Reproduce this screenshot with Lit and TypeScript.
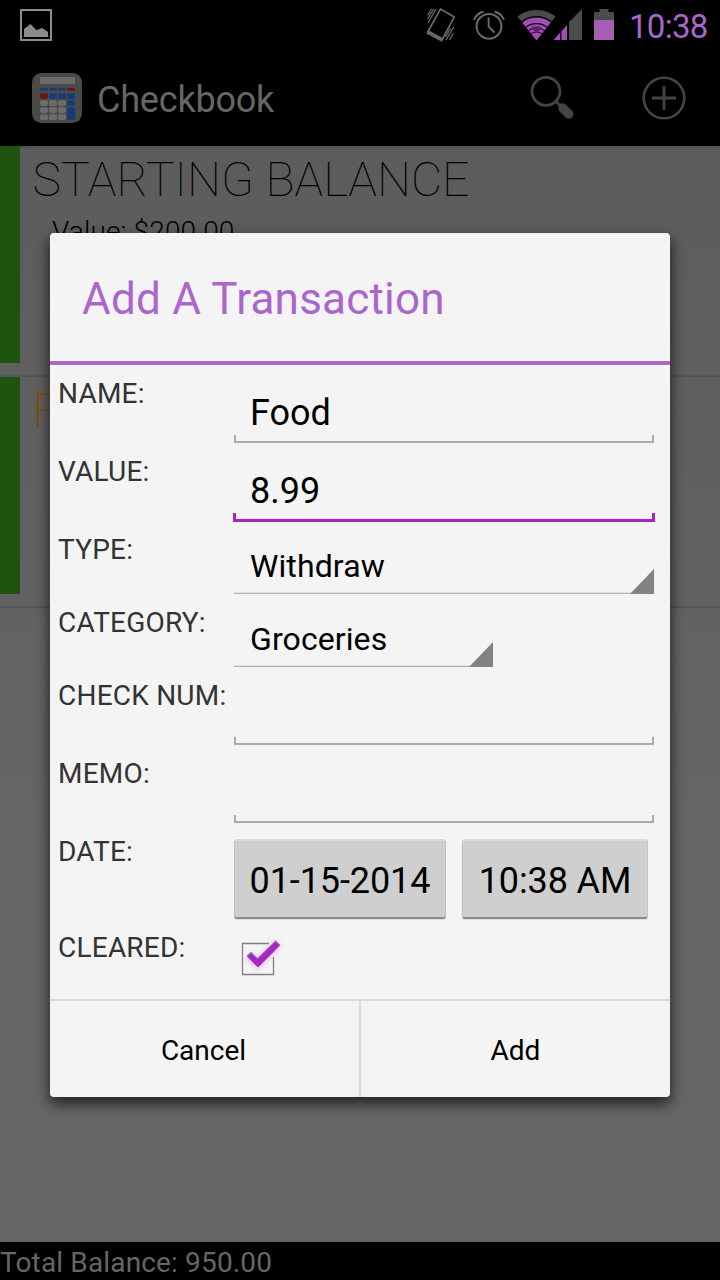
import { LitElement, html, css, svg } from "lit";
import { customElement } from "lit/decorators.js";

const keys: Array<[number, number, number, number, string]> = [
  [8, 15, 8, 2.4, "#173a78"], [17, 15, 8, 2.4, "#173a78"], [26, 15, 8, 2.4, "#173a78"], [35, 15, 8, 2.4, "#6b1610"],
  [8, 20.3, 8, 5.6, "#6b1610"], [17, 20.3, 8, 5.6, "#173a78"], [26, 20.3, 8, 5.6, "#173a78"], [35.2, 20.3, 8, 5.6, "#173a78"],
  [8, 27.3, 8, 5.6, "#6c6c6c"], [17, 27.3, 8, 5.6, "#6c6c6c"], [26, 27.3, 8, 5.6, "#6c6c6c"], [35.2, 27.3, 8, 5.6, "#173a78"],
  [8, 34.3, 8, 5.6, "#6c6c6c"], [17, 34.3, 8, 5.6, "#6c6c6c"], [26, 34.3, 8, 5.6, "#6c6c6c"], [35.2, 34.3, 8, 12.8, "#173a78"],
  [8, 41.3, 8, 5.8, "#6c6c6c"], [17, 41.3, 8, 5.8, "#6c6c6c"], [26, 41.3, 8, 5.8, "#6c6c6c"],
];

@customElement("app-root")
export class AppRoot extends LitElement {
  static styles = css`
    :host { display: block; width: 720px; height: 1280px; font-family: Roboto, sans-serif; }
    *, *::after { box-sizing: border-box; }
    svg { display: block; }
    .screen { position: relative; width: 720px; height: 1280px; overflow: hidden; display: flex; flex-direction: column; background: #000; white-space: nowrap; }
    .status { height: 50px; display: flex; align-items: center; padding: 0 12px 0 20px; flex: none; }
    .status .icons { margin-left: auto; }
    .clock { font-size: 33px; line-height: 50px; color: #aa66cc; margin-left: 12px; width: 80px; padding: 3px 0 0 1px; letter-spacing: -0.7px; }
    .bar { height: 96px; display: flex; align-items: center; padding: 0 34px 0 32px; flex: none; }
    .bar .name { font-size: 36px; color: #666; margin-left: 15px; padding-top: 3px; flex: 1; letter-spacing: -0.2px; }
    .bar .plus { margin-left: 67px; }
    .list { flex: 1; background: linear-gradient(#484848, #585858 2px, #5c5c5c 4px, #666 70%); }
    .item { height: 231px; padding-bottom: 12px; border-bottom: 2px solid #565656; display: flex; }
    .stripe { width: 20px; background: #1f5310; }
    .head { font-size: 48px; font-weight: 100; line-height: 56px; padding: 6px 0 0 12.5px; color: #000; }
    .head.orange { color: #8a4a0c; font-weight: 200; }
    .sub { font-size: 28px; font-weight: 300; line-height: 34px; padding: 7px 0 0 32px; color: #000; letter-spacing: 0.15px; }
    .total { height: 38px; background: #000; color: #666; font-size: 28px; line-height: 41px; flex: none; letter-spacing: 0.15px; }
    .dialog { position: absolute; left: 50px; top: 233px; width: 620px; height: 864px; background: #f4f4f4; border-radius: 4px; overflow: hidden; display: flex; flex-direction: column; }
    .shade { position: absolute; left: 50px; top: 233px; width: 620px; height: 864px; border-radius: 4px; box-shadow: 0 6px 14px 1px rgba(0,0,0,.65); }
    .title { height: 132px; border-bottom: 4px solid #aa66cc; color: #aa66cc; font-size: 44px; line-height: 132px; padding-left: 32px; letter-spacing: 0.22px; }
    .form { padding: 8px 16px 0 8px; height: 634px; }
    .row { display: flex; height: 78px; }
    .row.pick { height: 73px; }
    .row.date { height: 96px; }
    .label { width: 176px; flex: none; font-size: 28px; line-height: 41px; color: #333; letter-spacing: 0.22px; }
    .field { width: 420px; height: 70px; padding: 4px 16px 0; font-size: 36px; line-height: 72px; color: #000; position: relative; }
    .field::after { content: ""; position: absolute; left: 0; right: 0; bottom: 0; height: 8px; border: 2px solid #acacac; border-top: 0; }
    .field.focus::after { left: -1px; right: -1px; bottom: -1px; height: 9px; border-width: 3px; border-top: 0; border-color: #a726c3; }
    .spin { width: 420px; height: 65px; border-bottom: 1px solid #b2b2b2; box-shadow: inset 0 -1px #e0e0e0; display: flex; align-items: flex-end; padding-left: 16px; font-size: 32px; color: #000; letter-spacing: 0.1px; }
    .spin.short { width: 259px; }
    .spin span { flex: 1; line-height: 74px; height: 64px; }
    .tri { width: 24px; height: 25px; background: #828282; clip-path: polygon(100% 0, 100% 100%, 0 100%); margin-bottom: -1px; }
    .btn { height: 80px; margin: 8px 16px 0 0; width: 212px; border-radius: 3px; background: #cfcfcf; border: 1px solid #c3c3c3; border-top: 2px solid #dadada; border-bottom: 2px solid #8e8e8e; font-size: 36px; line-height: 80px; text-align: center; color: #000; box-shadow: 0 1px 1px #dedede; letter-spacing: -0.1px; }
    .btn.time { width: 186px; margin-right: 0; }
    .actions { flex: 1; display: flex; border-top: 2px solid #dadada; border-bottom: 1px solid #d5d5d5; }
    .action { width: 309px; text-align: center; font-size: 28px; line-height: 99px; color: #000; padding-right: 2px; }
    .action + .action { width: 311px; border-left: 2px solid #dadada; padding: 0; }
  `;

  row(label: string, content: unknown, kind = "") {
    return html`<div class="row ${kind}"><div class="label">${label}</div>${content}</div>`;
  }

  render() {
    return html`<div class="screen">
      <div class="status">
        <svg width="32" height="34" viewBox="20 8 32 34">
          <rect x="21" y="10" width="30" height="30" fill="none" stroke="#8c8c8c" stroke-width="2"/>
          <path d="M24 37V29L30.500 24L36.500 30.200L42 28L48 32V37Z" fill="#8c8c8c"/>
        </svg>
        <svg class="icons" width="190" height="50" viewBox="426 0 190 50">
          <defs><clipPath id="fan"><path d="M511.500 9L536.500 40.500L561.500 9V0H511.500Z"/></clipPath></defs>
          <g fill="none" stroke="#6a6a6a" stroke-width="1.300">
            <path d="M440.500 9L454.300 17L442.500 39L428 31.500Z" stroke-width="1.600" stroke-linejoin="round"/>
            <path d="M428.300 31L442.800 38.800L441.500 41L427.200 33.300Z" fill="#6a6a6a"/>
            <path d="M436 9L428 23M431.500 9L427.500 15.500M433.700 9L427.700 19M453.800 27L446 40M453.300 33.500L449.500 40M450.500 28.500L445.500 37"/>
            <circle cx="489" cy="26.300" r="12.400" stroke-width="2"/>
            <path d="M488.600 17.500V26.500L494.500 32.500" stroke-width="1.900"/>
            <path d="M474 20Q476.500 13.500 483.500 11.500M494.500 11.500Q501.500 13.500 504 20" stroke-width="2"/>
          </g>
          <g clip-path="url(#fan)">
            <circle cx="536.500" cy="41" r="31" fill="#4b4b4b"/>
            <circle cx="536.500" cy="41" r="25" fill="#000"/>
            <circle cx="536.500" cy="41" r="23.500" fill="#a54bb8"/>
            <g fill="none" stroke="#12000f" stroke-width="1.200"><circle cx="536.500" cy="41" r="17.300"/><circle cx="536.500" cy="41" r="9"/><circle cx="536.500" cy="41" r="13"/></g>
            <path d="M532 26.500H541L539 31.500H534Z" fill="#55265f"/>
          </g>
          <path d="M582 9V40H569V22Z" fill="#4b4b4b"/>
          <path d="M567 25V40H553.500Z" fill="#a54bb8"/>
          <path d="M560.800 31V40M568 22V41" stroke="#000" stroke-width="1.200"/>
          <path d="M594 20V12H599.500V9H608.500V12H614V20Z" fill="#4b4b4b"/>
          <rect x="594" y="20" width="20" height="20" fill="#a45fb2"/>
        </svg>
        <div class="clock">10:38</div>
      </div>
      <div class="bar">
        <svg width="50" height="50" viewBox="0 0 50 50">
          <rect width="50" height="50" rx="9.500" fill="#4a4b49"/>
          <rect x="8" y="4" width="35" height="7" fill="#6a6a6a"/>
          ${keys.map(([x, y, w, h, c]) => svg`<rect x=${x} y=${y} width=${w} height=${h} rx=${h < 3 ? 0.5 : 1.8} fill=${c}/>`)}
        </svg>
        <div class="name">Checkbook</div>
        <svg width="45" height="46" viewBox="530 76 45 46">
          <circle cx="546" cy="92.300" r="14" fill="none" stroke="#444" stroke-width="2.800"/>
          <path d="M555.500 102L561 107.500" stroke="#444" stroke-width="3"/>
          <path d="M562.800 109.300L568.800 115.300" stroke="#444" stroke-width="9" stroke-linecap="round"/>
          <path d="M559 110V106.500L561 104.500H564L572.800 112.500L566.500 118.500Z" fill="#444"/>
        </svg>
        <svg class="plus" width="44" height="44" viewBox="0 0 44 44">
          <g fill="none" stroke="#444"><circle cx="22" cy="22" r="20.300" stroke-width="2.600"/><path d="M10 22H34M22 10V34" stroke-width="2.800"/></g>
        </svg>
      </div>
      <div class="list">
        <div class="item"><div class="stripe"></div><div><div class="head">STARTING BALANCE</div><div class="sub">Value: $200.00</div></div></div>
        <div class="item"><div class="stripe"></div><div class="head orange">F</div></div>
      </div>
      <div class="total">Total Balance: 950.00</div>
      <div class="shade"></div>
      <div class="dialog">
        <div class="title">Add A Transaction</div>
        <div class="form">
          ${this.row("NAME:", html`<div class="field">Food</div>`)}
          ${this.row("VALUE:", html`<div class="field focus">8.99</div>`)}
          ${this.row("TYPE:", html`<div class="spin"><span>Withdraw</span><div class="tri"></div></div>`, "pick")}
          ${this.row("CATEGORY:", html`<div class="spin short"><span>Groceries</span><div class="tri"></div></div>`, "pick")}
          ${this.row("CHECK NUM:", html`<div class="field"></div>`)}
          ${this.row("MEMO:", html`<div class="field"></div>`)}
          ${this.row("DATE:", html`<div class="btn">01-15-2014</div><div class="btn time">10:38 AM</div>`, "date")}
          ${this.row("CLEARED:", html`<svg width="60" height="64" viewBox="234 927 60 64">
            <defs>
              <filter id="glow" x="-50%" y="-50%" width="200%" height="200%"><feGaussianBlur stdDeviation="3"/></filter>
            </defs>
            <path d="M269 943.500H242.500V974.500H273.500V957" fill="none" stroke="#808080" stroke-width="1.300"/>
            <path d="M249 956L258 964L277 944" fill="none" stroke="#c45fd8" stroke-width="6" opacity=".5" filter="url(#glow)"/>
            <path d="M247 956.500L251 952.500L257.500 959L275.500 941.300L280 945.500L258 967.500Z" fill="#a428c2"/>
            <path d="M247 956.500L251 952.500L257.500 959L275.500 941.300L280 945.500" fill="none" stroke="#98609f" stroke-width="1.200"/>
          </svg>`)}
        </div>
        <div class="actions"><div class="action">Cancel</div><div class="action">Add</div></div>
      </div>
    </div>`;
  }
}
